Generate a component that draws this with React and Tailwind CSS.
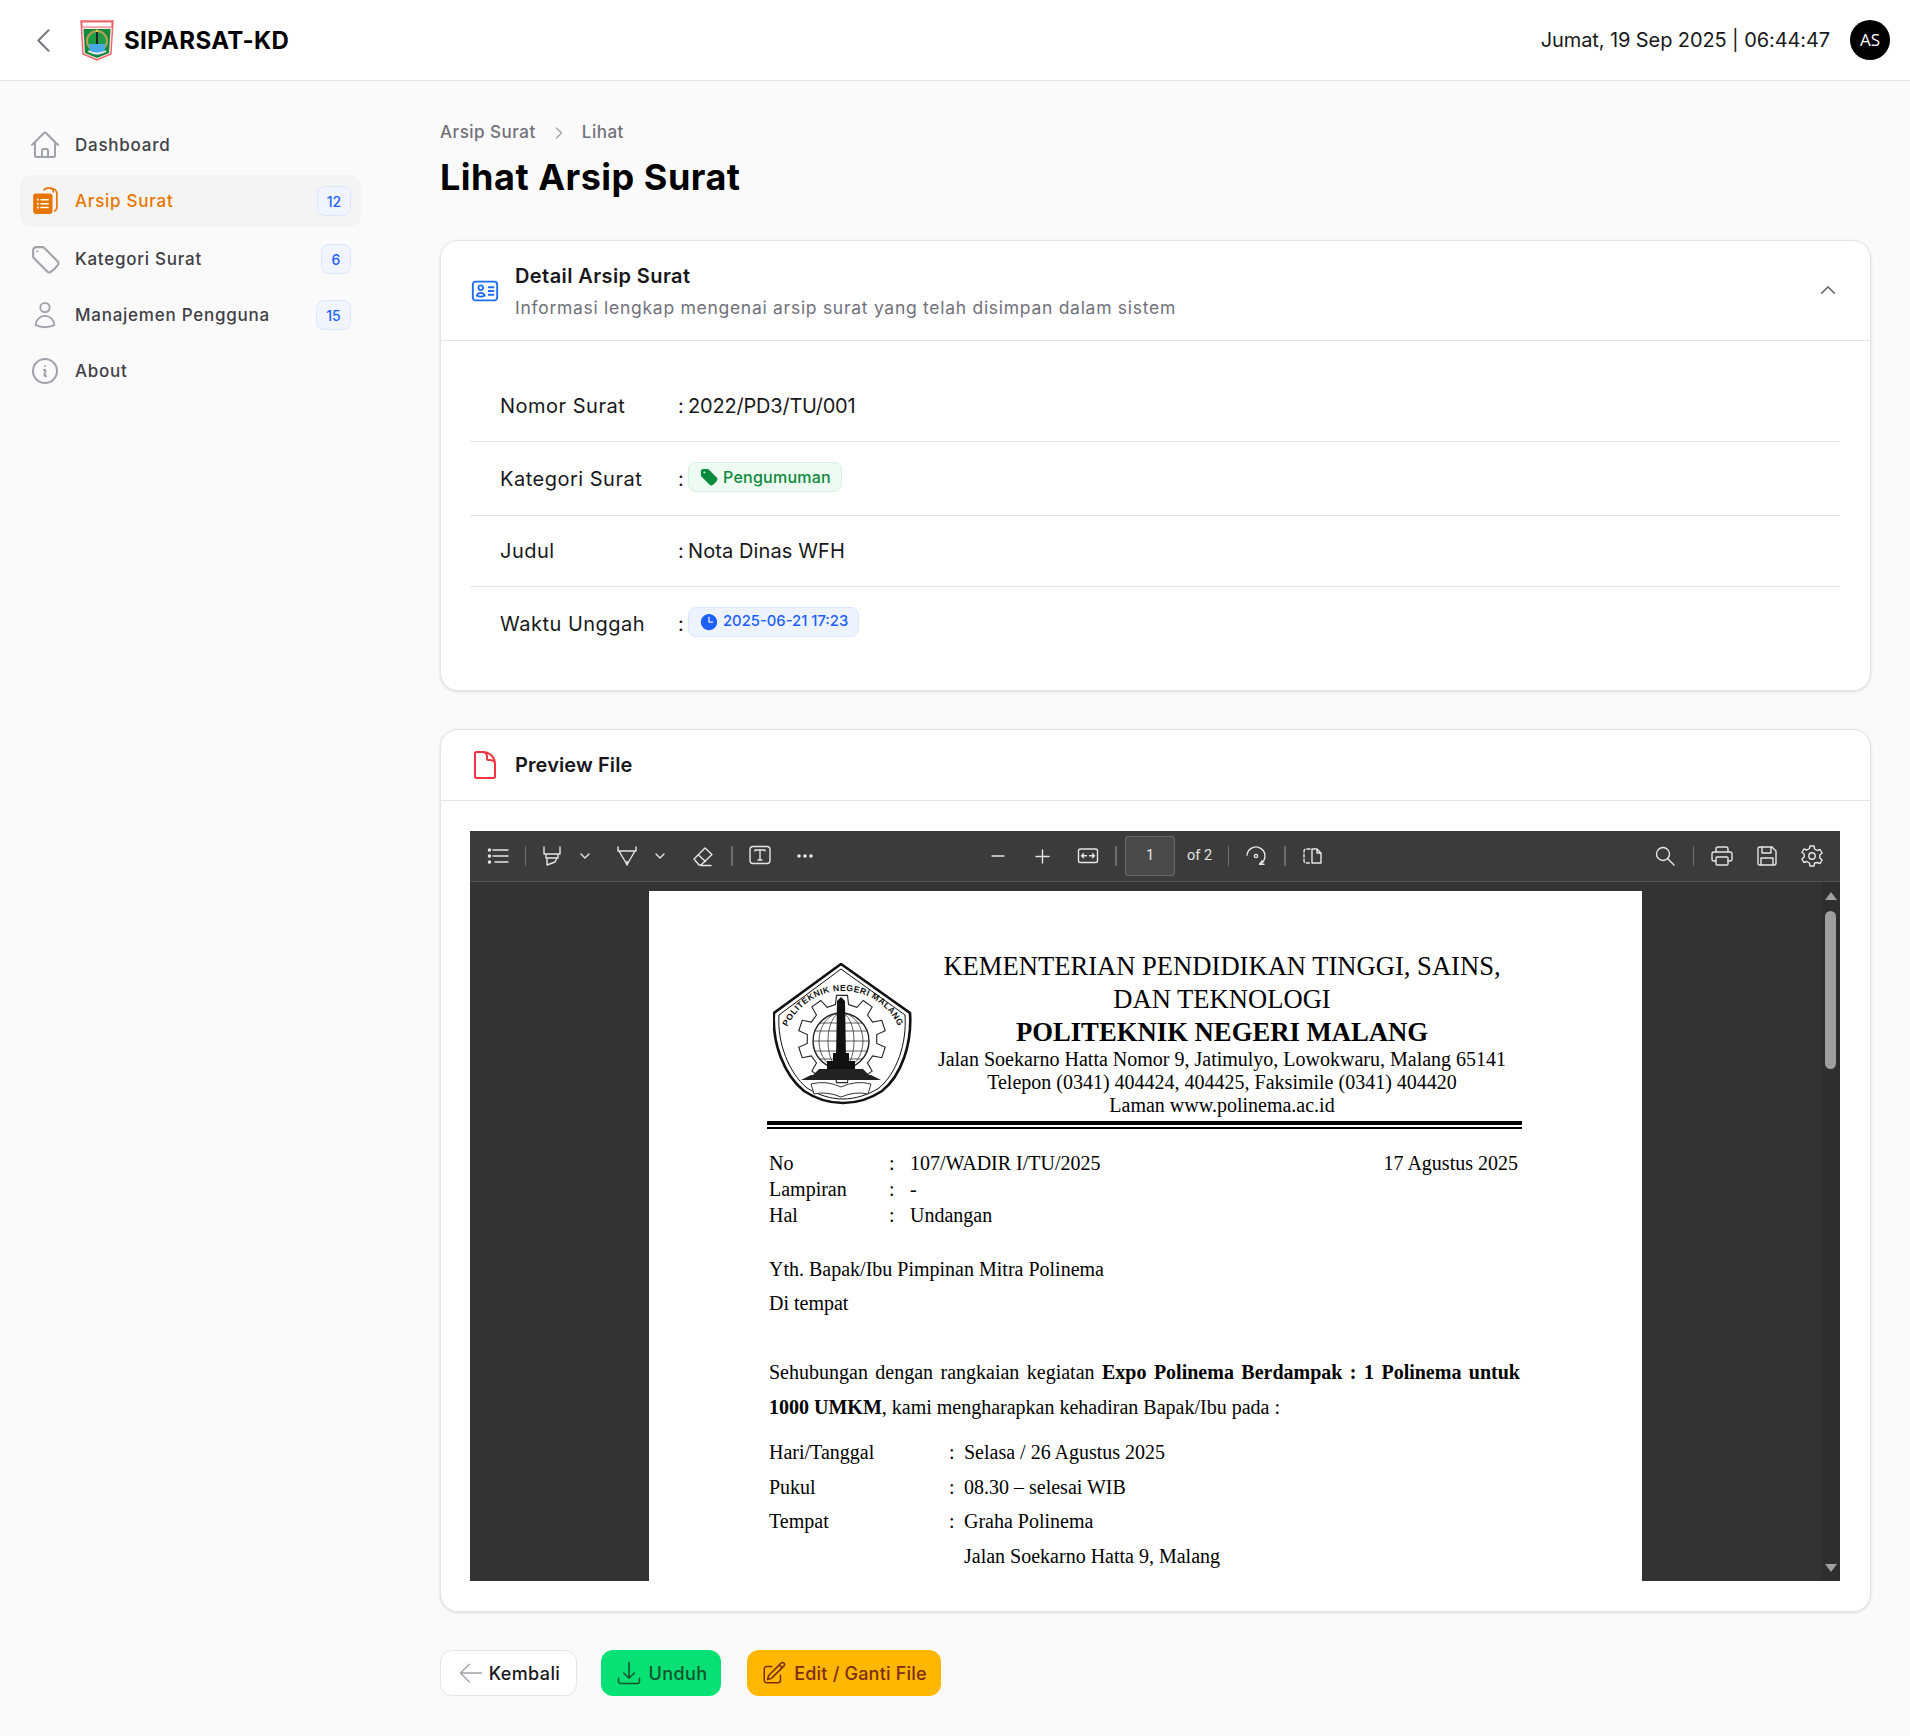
import React from "react";
import {
  HiOutlineHome,
  HiOutlineTag,
  HiOutlineUser,
  HiOutlineInformationCircle,
  HiOutlineIdentification,
  HiOutlineDocument,
  HiOutlineChevronUp,
  HiOutlineChevronLeft,
  HiOutlineChevronRight,
  HiOutlineArrowLeft,
  HiOutlineArrowDownTray,
  HiOutlinePencilSquare,
  HiTag,
  HiClock,
} from "react-icons/hi2";

const sans = "font-['Inter','Noto_Sans',sans-serif]";

// Regional crest next to the app name
function RegionLogo() {
  return (
    <svg width="34" height="41" viewBox="0 0 34 41" className="shrink-0">
      <path d="M1 1h32l-2 33-14 6-14-6z" fill="#fbe4e4" stroke="#f0656a" strokeWidth="1.4" />
      <rect x="2" y="2" width="30" height="5" fill="#fff" stroke="#e2434b" strokeWidth="0.8" />
      <path d="M3.5 9h27l-1.5 24-12 5-12-5z" fill="#0f8a3a" />
      <circle cx="17" cy="21" r="10" fill="#1f9b46" stroke="#b8a05a" strokeWidth="2" />
      <path d="M9 24h16v3a8 8 0 0 1-16 0z" fill="#47a9e6" />
      <rect x="16" y="12" width="2" height="12" fill="#222" />
      <path d="M17 9l1.2 2.4h-2.4z" fill="#f6e04a" />
      <path d="M8 31q9 5 18 0" stroke="#e8e8e8" strokeWidth="2" fill="none" />
    </svg>
  );
}

function ArsipIcon() {
  return (
    <svg width="26" height="28" viewBox="0 0 24 26" fill="none" className="shrink-0">
      <path d="M11 3.2c.5-1.4 1.8-2.2 3.2-2.2h2.6c1.6 0 3 1.3 3 3v1" stroke="#e87500" strokeWidth="1.6" />
      <path d="M17.4 1.4c3 0 5.6 1.6 5.6 4.6v13c0 1.6-.8 2.6-2 3.2" stroke="#e87500" strokeWidth="1.6" strokeLinecap="round" />
      <rect x="1" y="6" width="18" height="19" rx="2.6" fill="#e87500" />
      <g fill="#fff">
        <rect x="4.4" y="11" width="1.9" height="1.8" rx="0.9" />
        <rect x="4.4" y="14.6" width="1.9" height="1.8" rx="0.9" />
        <rect x="4.4" y="18.2" width="1.9" height="1.8" rx="0.9" />
        <rect x="7.6" y="11.2" width="8" height="1.4" rx="0.7" />
        <rect x="7.6" y="14.8" width="8" height="1.4" rx="0.7" />
        <rect x="7.6" y="18.4" width="8" height="1.4" rx="0.7" />
      </g>
    </svg>
  );
}

function NavItem({ icon, label, badge, active, badgeW }) {
  return (
    <div className={`flex items-center h-[52px] rounded-xl pl-[12px] pr-[10px] ${active ? "bg-[#f4f4f5] text-[#e87500] mb-[2px]" : "text-[#3f3f46]"}`}>
      <div className="w-[26px] flex justify-center text-[#a1a1aa]">{icon}</div>
      <span className="ml-[17px] mt-[2px] text-[17px] tracking-[0.75px] font-medium flex-1">{label}</span>
      {badge && (
        <span className={`h-[30px] ${badgeW} flex items-center justify-center rounded-lg border border-[#dbe7ff] bg-[#f0f5ff] text-[#1d5fff] text-[14px] font-medium`}>
          {badge}
        </span>
      )}
    </div>
  );
}

function Sidebar() {
  return (
    <aside className="w-[400px] shrink-0 pl-[20px] pr-[39px] pt-[38px] flex flex-col gap-[4px]">
      <NavItem icon={<HiOutlineHome size={32} className="shrink-0" />} label="Dashboard" />
      <NavItem icon={<ArsipIcon />} label="Arsip Surat" badge="12" badgeW="w-[34px]" active />
      <NavItem icon={<HiOutlineTag size={33} className="shrink-0" />} label="Kategori Surat" badge="6" badgeW="w-[30px]" />
      <NavItem icon={<HiOutlineUser size={30} className="shrink-0" />} label="Manajemen Pengguna" badge="15" badgeW="w-[35px]" />
      <NavItem icon={<HiOutlineInformationCircle size={32} className="shrink-0" />} label="About" />
    </aside>
  );
}

function DetailRow({ label, children, rowClass, last }) {
  return (
    <div className={`flex items-center pl-[30px] ${rowClass} ${last ? "" : "border-b border-[#e4e4e7]"}`}>
      <span className="w-[178px] shrink-0 text-[20px] tracking-[0.5px] text-[#18181b]">{label}</span>
      <span className="text-[20px] text-[#18181b] w-[10px] shrink-0">:</span>
      {children}
    </div>
  );
}

function Chip({ icon, text, colorClass, textClass }) {
  return (
    <span className={`inline-flex items-center h-[30px] -mt-[4px] rounded-lg border px-[10px] gap-[4px] font-medium ${colorClass}`}>
      {icon}
      <span className={textClass}>{text}</span>
    </span>
  );
}

function DetailCard() {
  return (
    <section className="bg-white rounded-[18px] border border-[#e4e4e7] shadow-[0_1px_3px_rgba(0,0,0,0.12)]">
      <div className="h-[100px] flex items-center pl-[29px] pr-[32px] border-b border-[#e4e4e7]">
        <HiOutlineIdentification size={30} className="text-[#1d6bff] shrink-0" />
        <div className="ml-[15px] flex-1 pt-[3px]">
          <h2 className="text-[20px] font-semibold text-[#18181b] tracking-[0.4px] leading-[30px]">Detail Arsip Surat</h2>
          <p className="text-[17.5px] text-[#71717a] tracking-[0.72px] leading-[30px] mt-[2px]">Informasi lengkap mengenai arsip surat yang telah disimpan dalam sistem</p>
        </div>
        <HiOutlineChevronUp size={20} strokeWidth={2} className="text-[#71717a] -mt-[2px]" />
      </div>
      <div className="pl-[29px] pr-[30px] pt-[30px] pb-[30px]">
        <DetailRow label="Nomor Surat" rowClass="h-[71px]">
          <span className="text-[20px] tracking-[-0.2px] text-[#18181b]">2022/PD3/TU/001</span>
        </DetailRow>
        <DetailRow label="Kategori Surat" rowClass="h-[74px]">
          <Chip icon={<HiTag size={20} />} text="Pengumuman" colorClass="border-[#d1f2dc] bg-[#edfbf2] text-[#0a8a3c]" textClass="text-[16px] tracking-[0.25px]" />
        </DetailRow>
        <DetailRow label="Judul" rowClass="h-[71px]">
          <span className="text-[20px] tracking-[0.1px] text-[#18181b]">Nota Dinas WFH</span>
        </DetailRow>
        <DetailRow label="Waktu Unggah" rowClass="h-[73px]" last>
          <Chip icon={<HiClock size={20} />} text="2025-06-21 17:23" colorClass="border-[#dbe7ff] bg-[#eef4ff] text-[#1d5fff]" textClass="text-[14.8px]" />
        </DetailRow>
      </div>
    </section>
  );
}

// Toolbar glyphs of the embedded PDF viewer
const Ico = ({ w = 24, h = 24, vb = "0 0 24 24", children }) => (
  <svg width={w} height={h} viewBox={vb} fill="none" stroke="currentColor" strokeWidth="1.4" strokeLinecap="round" strokeLinejoin="round">
    {children}
  </svg>
);

const ListIcon = () => <Ico><circle cx="3.5" cy="6" r="1" fill="currentColor" /><circle cx="3.5" cy="12" r="1" fill="currentColor" /><circle cx="3.5" cy="18" r="1" fill="currentColor" /><path d="M7 6h15M7 12h15M9 18h13" /></Ico>;
const HighlightIcon = () => <Ico><path d="M4 3v7h16V3M6 10v4h12v-4M7 14v7l8-3 2-4" /></Ico>;
const PenIcon = () => <Ico><path d="M3 3v4h18V3M4 7l6.5 11h3L20 7M10.5 18l1.5 3 1.5-3" /></Ico>;
const EraserIcon = () => <Ico><path d="M3 15 14 4l7 6.5L10 21H8zM7.5 11l7 6.5M10 21.5h10" /></Ico>;
const TextIcon = () => <Ico><rect x="2" y="2.5" width="20" height="17" rx="3" /><path d="M7 7V6h10v1M12 6v10M10 16h4" /></Ico>;
const DotsIcon = () => <svg width="18" height="6" viewBox="0 0 18 6" fill="currentColor"><circle cx="3" cy="3" r="1.8" /><circle cx="9" cy="3" r="1.8" /><circle cx="15" cy="3" r="1.8" /></svg>;
const ChevSmall = () => <Ico w={10} h={6} vb="0 0 10 6"><path d="M1 1l4 4 4-4" /></Ico>;
const MinusIcon = () => <Ico w={14} h={14} vb="0 0 14 14"><path d="M1 7h12" /></Ico>;
const PlusIcon = () => <Ico w={15} h={15} vb="0 0 15 15"><path d="M1 7.5h13M7.5 1v13" /></Ico>;
const FitIcon = () => <Ico h={18} vb="0 0 24 18"><rect x="2.5" y="2" width="19" height="13.5" rx="1.8" /><path d="M5.5 8.8h5M7.5 6.8l-2 2 2 2M13.5 8.8h5M16.5 6.8l2 2-2 2" /></Ico>;
const RotateIcon = () => <Ico><path d="M3 11a9 9 0 1 1 13 9" /><circle cx="12" cy="12" r="1.6" /><path d="M18 17l-2.5 3.3H20" /></Ico>;
const SpreadIcon = () => <Ico><path d="M10 5H6a2 2 0 0 0-2 2v10a2 2 0 0 0 2 2h4" strokeDasharray="3 2" /><path d="M12 5h5l4 4v10h-9zM17 5v4h4" /></Ico>;
const SearchIcon = () => <Ico><circle cx="10" cy="10" r="6.5" /><path d="M15 15l6 6" /></Ico>;
const PrintIcon = () => <Ico><path d="M6 8V5a2 2 0 0 1 2-2h8a2 2 0 0 1 2 2v3M6 17H4a2 2 0 0 1-2-2v-5a2 2 0 0 1 2-2h16a2 2 0 0 1 2 2v5a2 2 0 0 1-2 2h-2" /><rect x="6" y="13" width="12" height="8" rx="1" /></Ico>;
const SaveIcon = () => <Ico><path d="M3 5a2 2 0 0 1 2-2h12l4 4v12a2 2 0 0 1-2 2H5a2 2 0 0 1-2-2z" /><path d="M7 3v6h9V3M6 21v-7h12v7" /></Ico>;
const GearIcon = () => <Ico><circle cx="12" cy="12" r="3.2" /><path d="M10 2h4l.6 3 2.6 1.5 2.9-1 2 3.5-2.3 2 0 3 2.3 2-2 3.5-2.9-1L14.6 19l-.6 3h-4l-.6-3-2.6-1.5-2.9 1-2-3.5 2.3-2v-3L1.9 8.5l2-3.5 2.9 1L9.4 4.5z" /></Ico>;

const Sep = ({ mx, thick }) => <div className={`h-[20px] ${thick ? "w-[2px] bg-[#6b6b6b]" : "w-px bg-[#6f6f6f]"} ${mx}`} />;

function ViewerToolbar() {
  return (
    <div className="h-[51px] shrink-0 bg-[#3b3b3b] border-b border-[#525252] flex items-center text-[#e6e6e6] relative">
      <div className="flex items-center pl-[16px]">
        <ListIcon />
        <Sep mx="ml-[15px] mr-[14px]" />
        <HighlightIcon />
        <div className="ml-[16px] mr-[25px] flex"><ChevSmall /></div>
        <PenIcon />
        <div className="ml-[16px] mr-[26px] flex"><ChevSmall /></div>
        <EraserIcon />
        <Sep mx="ml-[16px] mr-[15px]" thick />
        <TextIcon />
        <div className="ml-[24px] flex"><DotsIcon /></div>
      </div>
      <div className="flex items-center ml-[177px]">
        <MinusIcon />
        <div className="ml-[30px] flex"><PlusIcon /></div>
        <div className="ml-[26px] flex"><FitIcon /></div>
        <Sep mx="ml-[15px] mr-[8px]" thick />
        <div className="w-[50px] h-[40px] rounded-[3px] border border-[#6a6a6a] bg-[#4a4a4a] flex items-center justify-center text-[14.5px] font-['Roboto',sans-serif]">1</div>
        <span className="ml-[12px] text-[14.5px] font-['Roboto',sans-serif]">of 2</span>
        <Sep mx="ml-[16px] mr-[15px]" />
        <RotateIcon />
        <Sep mx="ml-[16px] mr-[14px]" thick />
        <SpreadIcon />
      </div>
      <div className="flex items-center ml-auto pr-[16px]">
        <SearchIcon />
        <Sep mx="ml-[16px] mr-[16px]" />
        <PrintIcon />
        <div className="ml-[21px] flex"><SaveIcon /></div>
        <div className="ml-[21px] flex"><GearIcon /></div>
      </div>
    </div>
  );
}

// Polinema crest, drawn
function gearPoints(cx, cy, rOuter, rInner, teeth) {
  const pts = [];
  for (let i = 0; i < teeth; i++) {
    const a = (i / teeth) * Math.PI * 2 - Math.PI / 2;
    const w = (Math.PI * 2) / teeth;
    [[-0.3, rInner], [-0.2, rOuter], [0.2, rOuter], [0.3, rInner]].forEach(([o, r]) => {
      pts.push(`${cx + r * Math.cos(a + o * w)},${cy + r * Math.sin(a + o * w)}`);
    });
  }
  return pts.join(" ");
}

function PolinemaLogo() {
  return (
    <svg width="140" height="142" viewBox="0 0 140 142" className="shrink-0">
      <path d="M68 1 137 50c2 30-8 62-28 78-12 8-26 12-39 12s-27-4-39-12C11 112-1 80 1 50z" fill="none" stroke="#111" strokeWidth="2.6" />
      <path d="M68 6 132 52c2 28-8 58-26 73-11 7-24 11-36 11s-25-4-36-11C16 110 4 80 6 52z" fill="none" stroke="#111" strokeWidth="1" />
      <defs><path id="crest-arc" d="M12 70a61 61 0 0 1 116 0" /></defs>
      <polygon points={gearPoints(69, 76, 44, 35, 10)} fill="#fff" stroke="#222" strokeWidth="1.1" />
      <text fontFamily="'Liberation Sans',sans-serif" fontSize="8.6" fontWeight="700" fill="#111" letterSpacing="0.5">
        <textPath href="#crest-arc" startOffset="50%" textAnchor="middle">POLITEKNIK NEGERI MALANG</textPath>
      </text>
      <circle cx="68" cy="78" r="28" fill="#fff" stroke="#222" strokeWidth="1.4" />
      <g stroke="#333" strokeWidth="0.8" fill="none">
        <ellipse cx="68" cy="78" rx="13" ry="28" />
        <ellipse cx="68" cy="78" rx="22" ry="28" />
        <path d="M41 68h54M40 78h56M41 88h54M46 60h44M46 96h44" />
      </g>
      <path d="M64 38l4-4 4 4 1 58h-10z" fill="#111" />
      <path d="M60 90h16v8H60zM54 98h28v8H54z" fill="#111" />
      <path d="M28 117l10-5h60l10 5zM40 112l6-6h44l6 6z" fill="#222" />
      <path d="M38 121q15-4 30 3q15-7 30-3l-3 10q-13-3-27 3q-14-6-27-3z" fill="#fff" stroke="#333" strokeWidth="1" />
    </svg>
  );
}

function DocPage() {
  return (
    <div className="w-[993px] shrink-0 bg-white mt-[9px] pl-[120px] pr-[122px] pt-[59px] text-black font-['Liberation_Serif',serif] text-[20px]">
      <div className="flex">
        <div className="pl-[4px] pt-[13px]"><PolinemaLogo /></div>
        <div className="flex-1 ml-[11px] text-center">
          <div className="text-[26.6px] leading-[33px]">KEMENTERIAN PENDIDIKAN TINGGI, SAINS,</div>
          <div className="text-[26.6px] leading-[33px]">DAN TEKNOLOGI</div>
          <div className="text-[26.7px] leading-[33px] font-bold">POLITEKNIK NEGERI MALANG</div>
          <div className="leading-[23px] -mt-[1px]">Jalan Soekarno Hatta Nomor 9, Jatimulyo, Lowokwaru, Malang 65141</div>
          <div className="leading-[23px]">Telepon (0341) 404424, 404425, Faksimile (0341) 404420</div>
          <div className="leading-[23px]">Laman www.polinema.ac.id</div>
        </div>
      </div>
      <div className="border-t-[4px] border-b-[2px] border-black h-[8px] mt-[4px] w-[755px] -ml-[2px]" />
      <div className="mt-[21px] leading-[26px]">
        <div className="flex"><span className="w-[120px]">No</span><span className="w-[21px]">:</span><span className="flex-1">107/WADIR I/TU/2025</span><span className="mr-[2px]">17 Agustus 2025</span></div>
        <div className="flex"><span className="w-[120px]">Lampiran</span><span className="w-[21px]">:</span><span>-</span></div>
        <div className="flex"><span className="w-[120px]">Hal</span><span className="w-[21px]">:</span><span>Undangan</span></div>
      </div>
      <div className="mt-[24px] leading-[34px]">
        <div>Yth. Bapak/Ibu Pimpinan Mitra Polinema</div>
        <div>Di tempat</div>
      </div>
      <p className="mt-[35px] leading-[35.4px] text-justify">
        Sehubungan dengan rangkaian kegiatan <b>Expo Polinema Berdampak : 1 Polinema untuk 1000 UMKM</b>, kami mengharapkan kehadiran Bapak/Ibu pada :
      </p>
      <div className="mt-[9px] leading-[34.7px]">
        <div className="flex"><span className="w-[180px]">Hari/Tanggal</span><span className="w-[15px]">:</span><span>Selasa / 26 Agustus 2025</span></div>
        <div className="flex"><span className="w-[180px]">Pukul</span><span className="w-[15px]">:</span><span>08.30 – selesai WIB</span></div>
        <div className="flex"><span className="w-[180px]">Tempat</span><span className="w-[15px]">:</span><span>Graha Polinema</span></div>
        <div className="flex"><span className="w-[195px]" /><span>Jalan Soekarno Hatta 9, Malang</span></div>
      </div>
    </div>
  );
}

function PdfViewer() {
  return (
    <div className="h-[750px] flex flex-col bg-[#333333] overflow-hidden">
      <ViewerToolbar />
      <div className="flex-1 flex min-h-0 overflow-hidden">
        <div className="w-[179px] shrink-0" />
        <DocPage />
        <div className="flex-1" />
        <div className="w-[19px] shrink-0 bg-[#2e2e2e] flex flex-col items-center pt-[10px] pb-[9px]">
          <div className="w-0 h-0 border-x-[6px] border-x-transparent border-b-[8px] border-b-[#a0a0a0]" />
          <div className="w-[11px] h-[158px] rounded-full bg-[#9e9e9e] mt-[11px]" />
          <div className="mt-auto w-0 h-0 border-x-[6px] border-x-transparent border-t-[8px] border-t-[#a0a0a0]" />
        </div>
      </div>
    </div>
  );
}

function PreviewCard() {
  return (
    <section className="mt-[38px] bg-white rounded-[18px] border border-[#e4e4e7] shadow-[0_1px_3px_rgba(0,0,0,0.12)]">
      <div className="h-[71px] flex items-center pl-[28px] border-b border-[#e4e4e7]">
        <HiOutlineDocument size={32} className="text-[#f5333f] shrink-0" />
        <h2 className="ml-[14px] text-[20px] font-semibold text-[#18181b] tracking-[0.1px]">Preview File</h2>
      </div>
      <div className="pl-[29px] pr-[30px] pt-[30px] pb-[30px]">
        <PdfViewer />
      </div>
    </section>
  );
}

export default function App() {
  return (
    <div className={`min-h-[1736px] bg-[#fafafa] flex flex-col ${sans}`}>
      <header className="h-[81px] shrink-0 bg-white border-b border-[#e4e4e7] flex items-center pl-[27px] pr-[20px]">
        <HiOutlineChevronLeft size={33} strokeWidth={1.4} className="text-[#71717a]" />
        <div className="ml-[20px] flex"><RegionLogo /></div>
        <span className="ml-[10px] mt-[2px] text-[24px] font-bold tracking-[0.35px] text-black">SIPARSAT-KD</span>
        <span className="ml-auto text-[20px] tracking-[-0.1px] text-[#18181b]">Jumat, 19 Sep 2025 | 06:44:47</span>
        <div className="ml-[20px] w-[40px] h-[40px] rounded-full bg-black text-white flex items-center justify-center text-[17px] font-['Open_Sans',sans-serif]">AS</div>
      </header>
      <div className="flex flex-1">
        <Sidebar />
        <main className="flex-1 min-w-0 pl-[40px] pr-[39px] pt-[40px]">
          <div className="flex items-center text-[17px] text-[#71717a] font-medium h-[24px] tracking-[0.5px]">
            <span>Arsip Surat</span>
            <HiOutlineChevronRight size={16} strokeWidth={2} className="mx-[15px] text-[#a1a1aa]" />
            <span>Lihat</span>
          </div>
          <h1 className="text-[36px] font-bold text-black tracking-[0.5px] leading-[54px] mt-[5px]">Lihat Arsip Surat</h1>
          <div className="mt-[36px]">
            <DetailCard />
            <PreviewCard />
          </div>
          <div className="flex items-center mt-[38px] pb-[40px]">
            <button className="h-[46px] w-[137px] rounded-[12px] bg-white border border-[#e4e4e7] flex items-center justify-center gap-[4px] text-[18px] tracking-[0.4px] font-medium text-[#18181b]">
              <HiOutlineArrowLeft size={28} strokeWidth={1.2} className="text-[#a1a1aa]" />Kembali
            </button>
            <button className="ml-[24px] h-[46px] w-[120px] rounded-[12px] bg-[#06e074] flex items-center justify-center gap-[6px] text-[18px] tracking-[0.4px] font-medium text-[#14532d]">
              <HiOutlineArrowDownTray size={28} strokeWidth={1.3} />Unduh
            </button>
            <button className="ml-[26px] h-[46px] w-[194px] rounded-[12px] bg-[#ffb700] flex items-center justify-center gap-[7px] text-[18px] tracking-[0.2px] font-medium text-[#7c2d12]">
              <HiOutlinePencilSquare size={26} strokeWidth={1.4} />Edit / Ganti File
            </button>
          </div>
        </main>
      </div>
    </div>
  );
}
